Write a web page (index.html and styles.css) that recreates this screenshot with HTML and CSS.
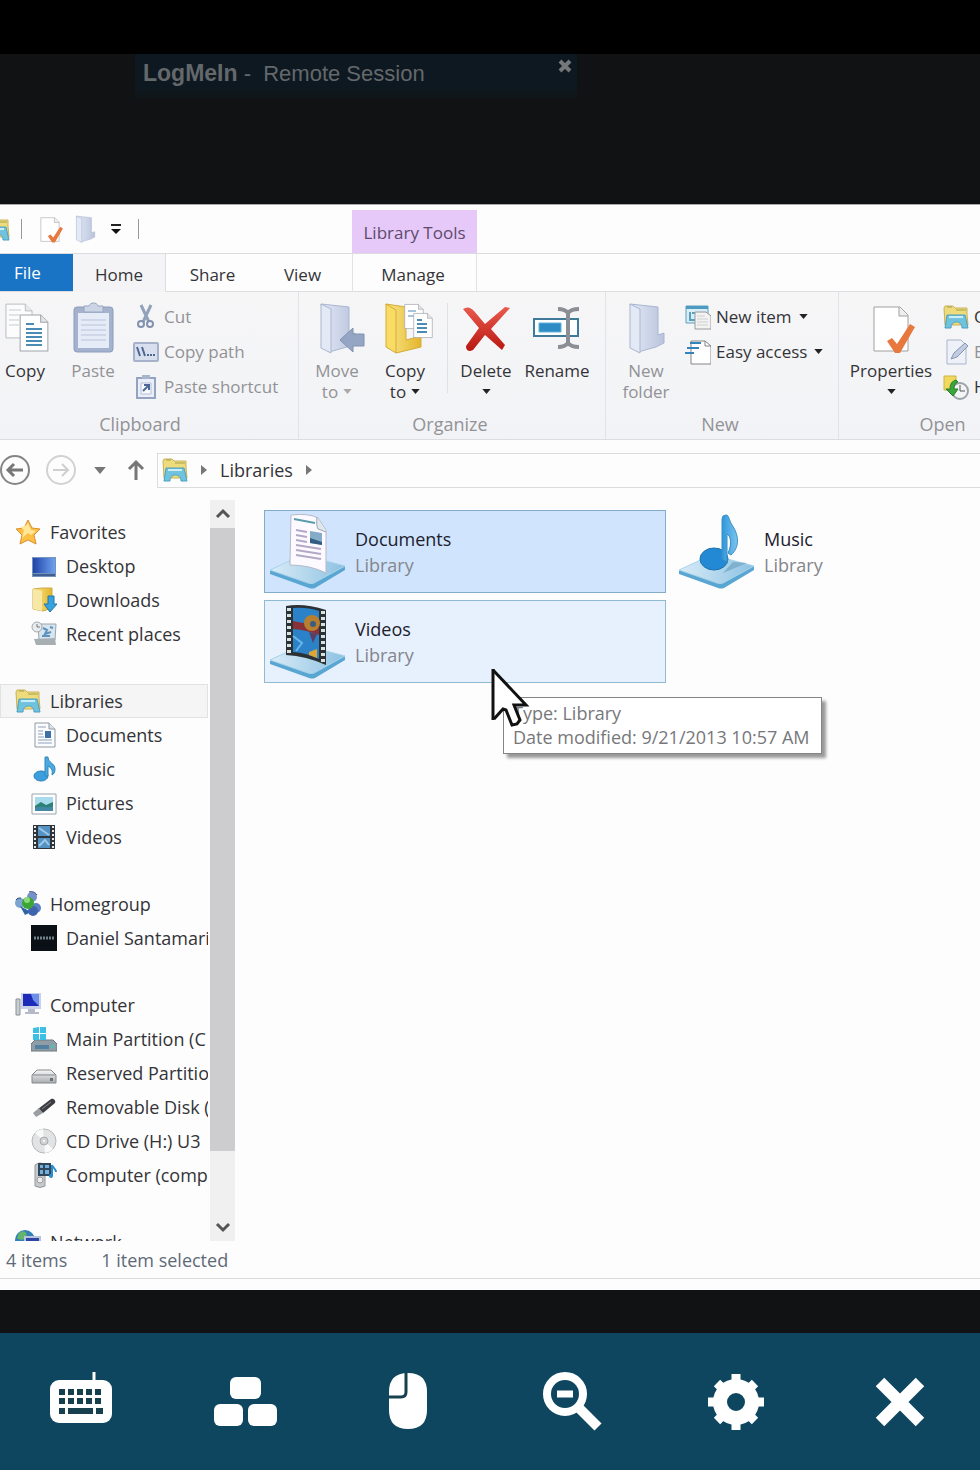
FILE: index.html
```
<!DOCTYPE html>
<html lang="en">
<head>
    <meta charset="UTF-8">
    <meta name="viewport" content="width=device-width, initial-scale=1.0">
    <title>LogMeIn - Remote Session</title>
    <link rel="stylesheet" href="styles.css">
</head>
<body>
    <!-- Shared icon shapes -->
    <svg class="sprite" aria-hidden="true">
        <defs>
            <linearGradient id="gYellow" x1="0" x2="1"><stop offset="0" stop-color="#fbe88a"/><stop offset="1" stop-color="#e3b52c"/></linearGradient>
            <linearGradient id="gPale" x1="0" x2="1"><stop offset="0" stop-color="#e3e8f5"/><stop offset="1" stop-color="#b9c4dd"/></linearGradient>
            <linearGradient id="gBase" x1="0" x2="1"><stop offset="0" stop-color="#d9ecf7"/><stop offset="1" stop-color="#8cc1e2"/></linearGradient>
            <linearGradient id="gNote" x1="0" x2="1"><stop offset="0" stop-color="#2f97dc"/><stop offset="1" stop-color="#7cc4ee"/></linearGradient>
            <linearGradient id="gDesk" x1="0" x2="1"><stop offset="0" stop-color="#1f44a8"/><stop offset="1" stop-color="#6fa1ee"/></linearGradient>
            <linearGradient id="gRed" x1="0" y1="0" x2="0" y2="1"><stop offset="0" stop-color="#ea5a4e"/><stop offset="1" stop-color="#b81710"/></linearGradient>
            <linearGradient id="gDrive" x1="0" y1="0" x2="0" y2="1"><stop offset="0" stop-color="#f7f7f7"/><stop offset="1" stop-color="#a9adb0"/></linearGradient>
        </defs>
        <symbol id="i-lib" viewBox="0 0 26 26">
            <path d="M1 4l1-2h8l2 2h12v6l1 11H2z" fill="#eedc7c" stroke="#c9b25a"/>
            <path d="M4 3h5M13 6h10" stroke="#a3a04c" fill="none"/>
            <path d="M4 11h18l3 13h-6c0-8-11-8-11 0H2z" fill="#6fc3df" stroke="#4e9fbe"/>
            <path d="M6 13h14" stroke="#cdeef8" stroke-width="2"/>
        </symbol>
        <symbol id="i-star" viewBox="0 0 26 26">
            <path d="M13 1l4 8 8 1-6 6 2 9-8-4-8 4 2-9-6-6 8-1z" fill="#fbc044" stroke="#d98f31" stroke-linejoin="round"/>
            <path d="M13 4l3 7 5 1-5 4-3-2-6 5 2-8-4-3 5-1z" fill="#ffe79a"/>
        </symbol>
        <symbol id="i-desktop" viewBox="0 0 26 26">
            <path d="M1 4h24v20H1z" fill="#7493bd"/><path d="M2 5h22v15H2z" fill="url(#gDesk)"/><path d="M2 21h22v2H2z" fill="#3f5f92"/>
        </symbol>
        <symbol id="i-down" viewBox="0 0 26 26">
            <path d="M2 2l9-1h10v20l-9 3-10-2z" fill="url(#gYellow)" stroke="#cda94a"/><path d="M2 2l9 2v20l-9-2z" fill="#f7e9a5"/>
            <path d="M17 9h6v8h3l-7 8-6-8h4z" fill="#37a3dc" stroke="#2176ab"/>
        </symbol>
        <symbol id="i-recent" viewBox="0 0 26 26">
            <path d="M7 3h18l-1 16H8z" fill="#d7e5ee" stroke="#9aa6ae"/><path d="M3 18l21-1 1 7H5z" fill="#a8afb3"/>
            <path d="M12 7l4 2-2 4 6-2M11 15h8M19 6l3 1" stroke="#5b93bd" stroke-width="2" fill="none"/>
            <circle cx="6" cy="6" r="5" fill="#e8ebed" stroke="#a3a9ad"/><path d="M6 3v3h3" stroke="#777" fill="none"/>
        </symbol>
        <symbol id="i-doc" viewBox="0 0 26 26">
            <path d="M4 1h14l6 6v18H4z" fill="#fbfcfd" stroke="#8f9aa3"/><path d="M18 1v6h6" fill="#dde5ea" stroke="#8f9aa3"/>
            <path d="M7 5h8M7 9h5M7 12h5M7 15h6M7 18h14M7 21h14" stroke="#8fa0b8" fill="none"/><path d="M14 9h6v7h-6z" fill="#3d6fa8"/>
        </symbol>
        <symbol id="i-music" viewBox="0 0 26 26">
            <ellipse cx="10" cy="20" rx="7" ry="5" fill="#3b9fdd" stroke="#2b7fb8"/>
            <path d="M14 20V1h3c0 6 7 6 7 12 0 3-1 5-3 6 1-6-1-7-4-9v10z" fill="#4aa9e0" stroke="#3087bd"/>
        </symbol>
        <symbol id="i-pic" viewBox="0 0 26 26">
            <path d="M1 4h24v20H1z" fill="#fff" stroke="#99a4ad"/><path d="M4 7h18v14H4z" fill="#a8dbee"/><path d="M4 16l6-4 5 3 7-3v9H4z" fill="#2c8274"/><path d="M4 18c6-3 12 1 18-2v5H4z" fill="#4287a5"/>
        </symbol>
        <symbol id="i-video" viewBox="0 0 26 26">
            <path d="M2 1h22v24H2z" fill="#30353c"/><path d="M7 2h12v10H7zM7 14h12v10H7z" fill="#5492c4"/>
            <path d="M8 4l10 7M8 22l6-6 4 5" stroke="#9cc8e8" stroke-width="2" fill="none"/>
            <path d="M4 2v23M22 2v23" stroke="#e5e9ec" stroke-width="2" stroke-dasharray="2 2"/>
        </symbol>
        <symbol id="i-home" viewBox="0 0 26 26">
            <circle cx="17" cy="6" r="5" fill="#7592c8"/><circle cx="5" cy="12" r="5" fill="#7ba5cf"/><circle cx="21" cy="17" r="5" fill="#5b82c5"/>
            <path d="M5 15l5 9 6-3" fill="#2e63a5"/><circle cx="18" cy="20" r="5" fill="#3f64ae"/>
            <circle cx="13" cy="12" r="6" fill="#3ba536"/><circle cx="12" cy="9" r="3" fill="#8ed97c"/><path d="M14 1c3-1 6 0 8 3M1 9c1-2 3-2 5-2" stroke="#27417c" fill="none"/>
        </symbol>
        <symbol id="i-user" viewBox="0 0 26 26">
            <path d="M0 0h26v26H0z" fill="#0b1016"/><path d="M3 13h20" stroke="#72808a" stroke-width="3" stroke-dasharray="2 1"/>
        </symbol>
        <symbol id="i-pc" viewBox="0 0 26 26">
            <path d="M1 7h4v16H1z" fill="#c9ccd0" stroke="#8c9196"/><path d="M6 1h20v16H6z" fill="#c9d0e8"/><path d="M8 2h16v12H8z" fill="#1c2bb8"/><path d="M16 2h8v12l-6-6z" fill="#6d8fea"/><path d="M13 17h7v3h4v2H10v-2h3z" fill="#b4bac8"/>
        </symbol>
        <symbol id="i-drive" viewBox="0 0 26 26">
            <path d="M1 15l5-5h14l5 5v8H1z" fill="url(#gDrive)" stroke="#85898c" stroke-linejoin="round"/><path d="M2 15h22" stroke="#85898c"/><path d="M19 18h3v3h-3z" fill="#6a6f72"/>
        </symbol>
        <symbol id="i-main" viewBox="0 0 26 26">
            <path d="M0 18l4-4h18l4 4v7H0z" fill="#8f9da6" stroke="#6c7a82"/><path d="M4 19h14v4H4z" fill="#5480a0"/><path d="M20 19h3v3h-3z" fill="#53c0b0"/>
            <path d="M2 2l6-1v6H2zM9 1h6v6H9zM2 8h6v6H2zM9 8h6v6H9z" fill="#3cc0e6"/>
        </symbol>
        <symbol id="i-usb" viewBox="0 0 26 26">
            <path d="M7 15L20 5c3-1 5 2 4 4L12 19z" fill="#3b3d40"/><path d="M2 19l6-5 4 5-7 4z" fill="#9b9fa3"/><path d="M11 15l9-7" stroke="#85898d"/>
        </symbol>
        <symbol id="i-cd" viewBox="0 0 26 26">
            <circle cx="13" cy="13" r="12" fill="#e2e3e4" stroke="#b5b7b9"/><path d="M13 13L4 5a12 12 0 0 1 8-4zM13 13l9 8a12 12 0 0 1-8 4z" fill="#f9f9f9"/><circle cx="13" cy="13" r="4" fill="#cfd2d4" stroke="#aaa"/><circle cx="13" cy="13" r="1" fill="#fff"/>
        </symbol>
        <symbol id="i-media" viewBox="0 0 26 26">
            <path d="M4 3q5-4 10 0v21q-5 3-10 0z" fill="#c6cacc" stroke="#93989b"/><circle cx="9" cy="18" r="3" fill="#eee" stroke="#999"/>
            <path d="M7 1h13v13H7z" fill="#33475a"/><path d="M9 3h3v3H9zM14 3h4v3h-4zM9 8h3v4H9zM14 8h4v4h-4z" fill="#6fb0dc"/>
            <circle cx="20" cy="14" r="2" fill="#298cce"/><path d="M21 14V3c1 3 4 4 4 7" stroke="#298cce" stroke-width="2" fill="none"/>
        </symbol>
        <symbol id="i-net" viewBox="0 0 26 26">
            <circle cx="10" cy="11" r="10" fill="#3381b8"/><path d="M4 4c5-4 9 0 7 4s-7 3-9 1z" fill="#63b56a"/><path d="M10 8h15v12H10z" fill="#2c46a6" stroke="#b8c4dc" stroke-width="2"/>
        </symbol>
        <symbol id="i-cut" viewBox="0 0 26 26">
            <path d="M8 1l8 17M18 1l-8 17" stroke="#93a2bb" stroke-width="3" fill="none"/><circle cx="8" cy="20" r="3" fill="none" stroke="#8291ae" stroke-width="2"/><circle cx="17" cy="20" r="3" fill="none" stroke="#8291ae" stroke-width="2"/>
        </symbol>
        <symbol id="i-path" viewBox="0 0 26 26">
            <rect x="1" y="4" width="24" height="18" rx="1" fill="#d8e0f0" stroke="#a5b2ca" stroke-width="2"/><path d="M4 8l3 9M9 8l3 9" stroke="#4f6890" stroke-width="2"/><path d="M14 16h8" stroke="#4f6890" stroke-width="2" stroke-dasharray="2 1"/>
        </symbol>
        <symbol id="i-short" viewBox="0 0 26 26">
            <path d="M4 4h18v20H4z" fill="#e9eef8" stroke="#94a3c0" stroke-width="2"/><path d="M9 1h8v4H9z" fill="#a7b4cc"/><path d="M8 9h10v11H8z" fill="#f7f9fd" stroke="#b3bfd6"/><path d="M10 17l6-6M11 11h5v5" stroke="#4c6698" stroke-width="2" fill="none"/>
        </symbol>
        <symbol id="i-newitem" viewBox="0 0 26 26">
            <path d="M1 2h22v17H1z" fill="#d9edf6" stroke="#5c9fbe"/><path d="M1 2h22v3H1z" fill="#4c9cc1"/><path d="M5 8v8h5M7 9h3" stroke="#5a9fbc" stroke-width="2" fill="none"/>
            <path d="M10 8h11l5 4v13H10z" fill="#f3f3f3" stroke="#9a9a9a"/><path d="M12 12h8M12 15h11M12 18h11M12 21h11" stroke="#cfcfcf"/>
        </symbol>
        <symbol id="i-easy" viewBox="0 0 26 26">
            <path d="M6 2h14l6 5v18H6z" fill="#fff" stroke="#858585"/><path d="M20 2v5h6" fill="none" stroke="#858585"/><path d="M5 4h11M2 9h12M0 14h9" stroke="#3384bd" stroke-width="2"/>
        </symbol>
        <symbol id="i-edit" viewBox="0 0 26 26">
            <path d="M4 1h14l5 5v19H4z" fill="#eef1f8" stroke="#aab4cb"/><path d="M8 20l3-6L22 4l3 3-11 11z" fill="#c2cce0" stroke="#8595b5"/>
        </symbol>
        <symbol id="i-history" viewBox="0 0 26 26">
            <path d="M1 2h12v14H1z" fill="#f0d95e" stroke="#cbb347"/><circle cx="17" cy="17" r="8" fill="#f2f4f5" stroke="#9da3a8" stroke-width="2"/><path d="M17 11v6h5" stroke="#555" fill="none"/><path d="M13 6c-4 1-6 4-6 9H3l7 7 5-7h-4c0-3 1-6 4-7z" fill="#3ba53a" stroke="#287d29"/>
        </symbol>
        <symbol id="i-props" viewBox="0 0 48 52">
            <path d="M7 5h26l8 8v36H7z" fill="#fff" stroke="#a0a0a0" stroke-width="1"/><path d="M32 5v9h9" fill="#eee" stroke="#a0a0a0"/>
            <path d="M20 39l5-3 5 6 13-20 5 3-15 26h-5z" fill="#e7793f"/>
        </symbol>
        <symbol id="i-palefolder" viewBox="0 0 48 52">
            <path d="M8 2l28 3v28l6-2v10l-8 4-18 5z" fill="url(#gPale)" stroke="#aab6d0"/><path d="M8 2l10 5v44L8 46z" fill="#e4e9f6" stroke="#aab6d0"/>
        </symbol>
        <symbol id="i-bigdoc" viewBox="0 0 29 37">
            <path d="M1 1h20l7 7v28H1z" fill="#fff" stroke="#9fa5aa"/><path d="M21 1v7h7" fill="#e5e5e5" stroke="#9fa5aa"/>
        </symbol>
        <symbol id="i-base" viewBox="0 0 78 78">
            <path d="M1 58l30-14q3-2 7 0l38 9v4L46 75q-3 1-6 0L1 61z" fill="#5aa6d2"/>
            <path d="M1 57l30-14q3-2 7 0l38 10L45 70q-3 1-6 0z" fill="url(#gBase)" stroke="#a8d3ea"/>
        </symbol>
        <symbol id="i-caret" viewBox="0 0 10 6"><path d="M0 0h10L5 6z" fill="currentColor"/></symbol>
    </svg>

    <div class="app">
        <div class="phone-bar"></div>
        <header class="session">
            <div class="session-bar">
                <p><b>LogMeIn</b> - &nbsp;Remote Session</p>
                <button class="session-close" aria-label="Close session">
                    <svg width="14" height="14" viewBox="0 0 14 14"><path d="M2 2l10 10M12 2L2 12" stroke="currentColor" stroke-width="4"/></svg>
                </button>
            </div>
        </header>

        <div class="window">
            <div class="titlebar">
                <div class="quick">
                    <svg class="quick-lib" viewBox="16 0 10 26"><use href="#i-lib" width="26" height="26"/></svg>
                    <span class="bar"></span>
                    <button aria-label="Properties"><svg width="26" height="28"><use href="#i-props"/></svg></button>
                    <button aria-label="New folder"><svg width="26" height="28"><use href="#i-palefolder"/></svg></button>
                    <button class="quick-more" aria-label="Customize"><svg width="10" height="10" viewBox="0 0 10 10"><path d="M0 1h10" stroke="#222" stroke-width="2"/><path d="M0 5h10l-5 5z" fill="#111"/></svg></button>
                    <span class="bar"></span>
                </div>
                <div class="lib-tools">Library Tools</div>
            </div>

            <nav class="tabs">
                <a href="#" class="file">File</a>
                <a href="#" class="home">Home</a>
                <a href="#" class="share">Share</a>
                <a href="#" class="view">View</a>
                <a href="#" class="manage">Manage</a>
            </nav>

            <div class="ribbon">
                <section class="group clipboard">
                    <div class="tools">
                        <button class="big copy">
                            <svg viewBox="0 0 48 52"><use href="#i-bigdoc" x="4" y="1" width="28" height="36" opacity="0.7"/><path d="M8 8h12M8 13h10M8 18h10M8 23h10" stroke="#c5ccd3"/><use href="#i-bigdoc" x="18" y="12" width="30" height="38"/><path d="M25 22h8M25 27h16M25 31h16M25 35h16M25 39h16M25 43h16" stroke="#4a8cb4" stroke-width="2"/></svg>
                            Copy
                        </button>
                        <button class="big paste off">
                            <svg viewBox="0 0 48 52"><rect x="5" y="5" width="39" height="45" rx="3" fill="#a4b2ce" stroke="#8d9cbc"/><path d="M9 11h31v35H9z" fill="#e6ecf7"/><path d="M12 18h25M12 23h25M12 28h25M12 33h25M12 38h25" stroke="#b9c4da"/><path d="M15 4h5c1-4 8-4 9 0h5v6H15z" fill="#ccd5e5" stroke="#98a6c1"/></svg>
                            Paste
                        </button>
                        <div class="stack">
                            <button class="small off"><svg><use href="#i-cut"/></svg>Cut</button>
                            <button class="small off"><svg><use href="#i-path"/></svg>Copy path</button>
                            <button class="small off"><svg><use href="#i-short"/></svg>Paste shortcut</button>
                        </div>
                    </div>
                    <h2>Clipboard</h2>
                </section>
                <section class="group organize">
                    <div class="tools">
                        <button class="big off">
                            <svg viewBox="0 0 48 52"><use href="#i-palefolder"/><path d="M27 38l13-12v6h11v12H40v6z" fill="#94a6c4" stroke="#8292b0"/></svg>
                            Move<span>to <svg class="caret"><use href="#i-caret"/></svg></span>
                        </button>
                        <button class="big">
                            <svg viewBox="0 0 48 52"><path d="M5 2l20 3v33l15-4v11L15 51z" fill="url(#gYellow)" stroke="#d4ac3a"/><path d="M5 2l10 6v43L5 45z" fill="#f8dc63" stroke="#d4ac3a"/><use href="#i-bigdoc" x="23" y="1" width="20" height="27"/><path d="M27 9h8M27 14h6" stroke="#4a8cb4"/><use href="#i-bigdoc" x="32" y="10" width="20" height="27"/><path d="M36 18h5M36 22h10M36 26h10M36 30h10" stroke="#4a8cb4" stroke-width="2"/></svg>
                            Copy<span>to <svg class="caret"><use href="#i-caret"/></svg></span>
                        </button>
                        <span class="divider"></span>
                        <button class="big delete">
                            <svg viewBox="0 0 48 52"><path d="M1 7q6-4 11 2l11 13L43 5l5 1-19 21 14 16-3 5-17-15L11 48q-7 3-7-4l13-18z" fill="url(#gRed)"/></svg>
                            Delete<span><svg class="caret"><use href="#i-caret"/></svg></span>
                        </button>
                        <button class="big rename">
                            <svg viewBox="0 0 48 52"><path d="M1 17h44v17H1z" fill="#fff" stroke="#40799a" stroke-width="2"/><path d="M6 21h22v9H6z" fill="#2d8cc3" stroke="#61b2dc"/><path d="M25 7q7 0 10 4 3-4 11-4M25 45q7 0 10-4 3 4 11 4M35 10v32" stroke="#8b8f95" stroke-width="4" fill="none"/></svg>
                            Rename
                        </button>
                    </div>
                    <h2>Organize</h2>
                </section>
                <section class="group new">
                    <div class="tools">
                        <button class="big folder off">
                            <svg viewBox="0 0 48 52"><use href="#i-palefolder"/></svg>
                            New<span>folder</span>
                        </button>
                        <div class="stack">
                            <button class="small"><svg><use href="#i-newitem"/></svg>New item <svg class="caret"><use href="#i-caret"/></svg></button>
                            <button class="small"><svg><use href="#i-easy"/></svg>Easy access <svg class="caret"><use href="#i-caret"/></svg></button>
                        </div>
                    </div>
                    <h2>New</h2>
                </section>
                <section class="group open">
                    <div class="tools">
                        <button class="big props">
                            <svg viewBox="0 0 48 52"><use href="#i-props"/></svg>
                            Properties<span><svg class="caret"><use href="#i-caret"/></svg></span>
                        </button>
                        <div class="stack">
                            <button class="small"><svg><use href="#i-lib"/></svg>Open</button>
                            <button class="small off"><svg><use href="#i-edit"/></svg>Edit</button>
                            <button class="small"><svg><use href="#i-history"/></svg>History</button>
                        </div>
                    </div>
                    <h2>Open</h2>
                </section>
            </div>

            <div class="address-row">
                <button class="back" aria-label="Back"><svg width="30" height="32" viewBox="0 0 30 32"><circle cx="15" cy="16" r="14" fill="none" stroke="#858585" stroke-width="2"/><path d="M23 16H9M14 10l-6 6 6 6" fill="none" stroke="#777" stroke-width="3"/></svg></button>
                <button class="forward" aria-label="Forward"><svg width="32" height="32" viewBox="0 0 32 32"><circle cx="16" cy="16" r="14" fill="none" stroke="#d2d2d2" stroke-width="2"/><path d="M8 16h14M17 10l6 6-6 6" fill="none" stroke="#cfcfcf" stroke-width="2"/></svg></button>
                <button class="recent" aria-label="Recent locations"><svg width="12" height="7" viewBox="0 0 10 6"><use href="#i-caret"/></svg></button>
                <button class="up" aria-label="Up"><svg width="16" height="20" viewBox="0 0 16 20"><path d="M8 20V3M1 9l7-7 7 7" fill="none" stroke="#777" stroke-width="3"/></svg></button>
                <div class="address">
                    <svg width="26" height="26"><use href="#i-lib"/></svg>
                    <svg width="6" height="10" viewBox="0 0 6 10"><path d="M0 0l6 5-6 5z" fill="#777"/></svg>
                    <a href="#">Libraries</a>
                    <svg width="6" height="10" viewBox="0 0 6 10"><path d="M0 0l6 5-6 5z" fill="#777"/></svg>
                </div>
            </div>

            <div class="content">
                <nav class="tree">
                    <ul>
                        <li><a href="#"><svg><use href="#i-star"/></svg>Favorites</a></li>
                        <li class="child"><a href="#"><svg><use href="#i-desktop"/></svg>Desktop</a></li>
                        <li class="child"><a href="#"><svg><use href="#i-down"/></svg>Downloads</a></li>
                        <li class="child"><a href="#"><svg><use href="#i-recent"/></svg>Recent places</a></li>
                    </ul>
                    <ul>
                        <li class="selected"><a href="#"><svg><use href="#i-lib"/></svg>Libraries</a></li>
                        <li class="child"><a href="#"><svg><use href="#i-doc"/></svg>Documents</a></li>
                        <li class="child"><a href="#"><svg><use href="#i-music"/></svg>Music</a></li>
                        <li class="child"><a href="#"><svg><use href="#i-pic"/></svg>Pictures</a></li>
                        <li class="child"><a href="#"><svg><use href="#i-video"/></svg>Videos</a></li>
                    </ul>
                    <ul>
                        <li><a href="#"><svg><use href="#i-home"/></svg>Homegroup</a></li>
                        <li class="child"><a href="#"><svg><use href="#i-user"/></svg>Daniel Santamari</a></li>
                    </ul>
                    <ul>
                        <li><a href="#"><svg><use href="#i-pc"/></svg>Computer</a></li>
                        <li class="child"><a href="#"><svg><use href="#i-main"/></svg>Main Partition (C</a></li>
                        <li class="child"><a href="#"><svg><use href="#i-drive"/></svg>Reserved Partitio</a></li>
                        <li class="child"><a href="#"><svg><use href="#i-usb"/></svg>Removable Disk (</a></li>
                        <li class="child"><a href="#"><svg><use href="#i-cd"/></svg>CD Drive (H:) U3</a></li>
                        <li class="child"><a href="#"><svg><use href="#i-media"/></svg>Computer (comp</a></li>
                    </ul>
                    <ul>
                        <li><a href="#"><svg><use href="#i-net"/></svg>Network</a></li>
                    </ul>
                </nav>
                <div class="scrollbar">
                    <button aria-label="Scroll up"><svg width="14" height="10" viewBox="0 0 14 10"><path d="M1 8l6-6 6 6" fill="none" stroke="#555" stroke-width="3"/></svg></button>
                    <div class="thumb"></div>
                    <div class="track"></div>
                    <button aria-label="Scroll down"><svg width="14" height="10" viewBox="0 0 14 10"><path d="M1 2l6 6 6-6" fill="none" stroke="#555" stroke-width="3"/></svg></button>
                </div>
                <main class="files">
                    <a href="#" class="item picked">
                        <svg viewBox="0 0 78 78"><use href="#i-base"/><path d="M22 2q18-2 27 3l8 12v43q-16-8-36-8z" fill="#fdfaff" stroke="#b5b9c8"/><path d="M48 4q-1 9 1 12l8 3" fill="#dfe6ee" stroke="#9aa6b5"/><path d="M25 6l21 4" stroke="#5a9cac" stroke-width="2"/><path d="M27 17l11 2M27 22l11 2M27 27l11 2M27 32l25 4M27 37l25 4M27 42l25 4" stroke="#b3a8c6" stroke-width="2"/><path d="M41 18l12 2v12l-12-2z" fill="#84acc9"/><path d="M41 25l12 4v3l-12-2z" fill="#335d80"/></svg>
                        <span>Documents<small>Library</small></span>
                    </a>
                    <a href="#" class="item">
                        <svg viewBox="0 0 78 78"><use href="#i-base"/><path d="M45 60l24-10-14-1z" fill="#7fb0ce"/><ellipse cx="36" cy="46" rx="14" ry="11" fill="#2389d5" stroke="#1c72ad"/><path d="M44 46V6q0-4 4-4c3 0 3 5 6 10 7 10 8 22-1 30l-3-2c4-8 3-17-1-19v28z" fill="url(#gNote)" stroke="#3a8fc2"/></svg>
                        <span>Music<small>Library</small></span>
                    </a>
                    <div class="tip-holder">
                        <a href="#" class="item hover">
                            <svg viewBox="0 0 78 78"><use href="#i-base"/><path d="M17 3q18-3 40 4v55q-20-9-40-10z" fill="#2c3136"/><path d="M24 5q14-1 26 3v48q-12-6-26-7z" fill="#2b82c9"/><path d="M24 18l26 5v9q-12-5-26-6z" fill="#883139"/><circle cx="43" cy="20" r="8" fill="#b8802e"/><circle cx="44" cy="21" r="3" fill="#3a5c82"/><path d="M40 29l8 2-4 9z" fill="#5b3f63"/><path d="M40 49l8-3v9l-8-3z" fill="#dba636"/><path d="M24 33l9 7-6 8" stroke="#6cb6e6" stroke-width="2" fill="none"/><path d="M20 5v47M54 8v53" stroke="#d8e3e0" stroke-width="4" stroke-dasharray="3 3"/></svg>
                            <span>Videos<small>Library</small></span>
                        </a>
                        <div class="tooltip">Type: Library<br>Date modified: 9/21/2013 10:57 AM</div>
                        <svg class="cursor" width="38" height="60" viewBox="0 0 38 60"><path d="M2 3v48l10-10h4l5 13 4 3 5-4-4-14h10z" fill="#fff"/><path d="M3 1v51" stroke="#111" stroke-width="3" fill="none"/><path d="M3 2l33 35H24l6 15-3 4-5 1-6-15-3-1-9 10" stroke="#111" stroke-width="3" fill="none"/></svg>
                    </div>
                </main>
            </div>

            <footer class="status"><span>4 items</span><span>1 item selected</span></footer>
        </div>

        <nav class="toolbar">
            <button aria-label="Keyboard">
                <svg viewBox="0 0 64 64"><path d="M44 2v10" stroke="#fff" stroke-width="3"/><rect x="0" y="10" width="62" height="43" rx="9" fill="#fff"/><path d="M9 22h44M9 31h44" stroke="#17404f" stroke-width="6" stroke-dasharray="6 3"/><path d="M9 41h6M18 41h25M46 41h7" stroke="#17404f" stroke-width="6"/></svg>
            </button>
            <button aria-label="Special keys">
                <svg viewBox="0 0 64 64"><g fill="#fff"><rect x="17" y="7" width="31" height="22" rx="6"/><rect x="1" y="34" width="29" height="22" rx="6"/><rect x="35" y="34" width="29" height="22" rx="6"/></g></svg>
            </button>
            <button aria-label="Mouse">
                <svg viewBox="0 0 64 64"><path d="M13 22Q13 3 32 3t19 19v18Q51 59 32 59T13 40z" fill="#fff"/><path d="M30 2v20q0 5-5 5H12" fill="none" stroke="#17404f" stroke-width="3"/></svg>
            </button>
            <button aria-label="Zoom out">
                <svg viewBox="0 0 64 64"><circle cx="25" cy="24" r="18" fill="none" stroke="#fff" stroke-width="8"/><path d="M17 24h16" stroke="#fff" stroke-width="7"/><path d="M37 36l21 21" stroke="#fff" stroke-width="10"/></svg>
            </button>
            <button aria-label="Settings">
                <svg viewBox="0 0 64 64"><g stroke="#fff" fill="none"><circle cx="33" cy="32" r="16" stroke-width="14"/><g stroke-width="9"><path d="M33 4v10M33 50v10M5 32h10M51 32h10"/><path d="M14 13l8 8M44 43l8 8M52 13l-8 8M22 43l-8 8"/></g></g></svg>
            </button>
            <button aria-label="Close">
                <svg viewBox="0 0 64 64"><path d="M14 12l40 40M54 12L14 52" stroke="#fff" stroke-width="12"/></svg>
            </button>
        </nav>
    </div>
</body>
</html>
```
FILE: styles.css
```
* {
    box-sizing: border-box;
}

body {
    margin: 0;
    font-family: "Open Sans", "Noto Sans", sans-serif;
    font-size: 18px;
    color: #343438;
    background: #111213;
}

button {
    margin: 0;
    padding: 0;
    border: none;
    background: none;
    font: inherit;
    color: inherit;
    cursor: pointer;
}

a {
    color: inherit;
    text-decoration: none;
}

svg {
    display: block;
    flex: none;
    overflow: visible;
}

.sprite {
    position: absolute;
    width: 0;
    height: 0;
}

.app {
    display: flex;
    flex-direction: column;
    height: 100vh;
    overflow: hidden;
}

/* Phone and session header */
.phone-bar {
    flex: none;
    height: 54px;
    background: #000;
}

.session {
    flex: none;
    height: 150px;
    padding-left: 135px;
}

.session-bar {
    display: flex;
    justify-content: space-between;
    align-items: flex-start;
    max-width: 442px;
    height: 44px;
    padding: 5px 5px 0 8px;
    background: linear-gradient(#0d1821 70%, #101618);
    color: #64686b;
    font-family: "Liberation Sans", Arial, sans-serif;
    font-size: 22px;
    line-height: 28px;
}

.session-bar p {
    margin: 0;
}

.session-bar b {
    font-size: 23px;
}

.session-close {
    color: #74787b;
}

/* Explorer window */
.window {
    flex: 1;
    min-height: 0;
    display: flex;
    flex-direction: column;
    margin-bottom: 43px;
    background: #fdfdfd;
    border-top: 1px solid #aaa;
}

.titlebar {
    flex: none;
    display: flex;
    height: 49px;
    border-bottom: 1px solid #dcdcde;
}

.quick {
    display: flex;
    align-items: center;
    width: 352px;
    gap: 9px;
}

.quick-lib {
    width: 10px;
    height: 26px;
    overflow: hidden;
}

.bar {
    width: 1px;
    height: 20px;
    margin: 0 6px 0 2px;
    background: #999;
}

.quick-more {
    margin: 0 6px 0 4px;
}

.lib-tools {
    width: 125px;
    margin-top: 5px;
    background: #e6c9f8;
    color: #5d4a6c;
    font-size: 17px;
    line-height: 46px;
    text-align: center;
}

.tabs {
    flex: none;
    display: flex;
    height: 38px;
    font-size: 17px;
    line-height: 42px;
    text-align: center;
    border-bottom: 1px solid #dedee2;
}

.tabs .file {
    width: 73px;
    padding-left: 14px;
    background: #1a74c6;
    color: #fff;
    text-align: left;
    line-height: 38px;
}

.tabs .home {
    width: 93px;
    height: 38px;
    background: #f4f4f6;
    border-right: 1px solid #dedee2;
}

.tabs .share {
    width: 93px;
}

.tabs .view {
    width: 87px;
}

.tabs .manage {
    width: 125px;
    margin-left: 6px;
    padding-right: 3px;
    border: 1px solid #e2e2e2;
    border-width: 0 1px;
}

/* Ribbon */
.ribbon {
    flex: none;
    display: flex;
    height: 148px;
    background: linear-gradient(#f6f6f7, #f2f3f6);
    border-bottom: 1px solid #dcdcde;
    overflow: hidden;
    font-size: 17px;
}

.group {
    flex: none;
    display: flex;
    flex-direction: column;
    justify-content: space-between;
    padding-top: 7px;
    border-right: 1px solid #e2e3e8;
}

.group h2 {
    margin: 0;
    padding-right: 4px;
    font-size: 18px;
    font-weight: normal;
    line-height: 30px;
    text-align: center;
    color: #929296;
}

.clipboard {
    width: 299px;
}

.clipboard h2 {
    padding-right: 18px;
}

.organize {
    width: 307px;
}

.new {
    width: 233px;
}

.open {
    width: 212px;
}

.tools {
    display: flex;
    align-items: flex-start;
}

.big {
    display: flex;
    flex-direction: column;
    align-items: center;
    width: 68px;
    padding-top: 3px;
    line-height: 21px;
}

.big > svg {
    width: 48px;
    height: 52px;
    margin-bottom: 6px;
}

.big span {
    display: flex;
    align-items: center;
    justify-content: center;
    gap: 5px;
    min-height: 20px;
}

.off {
    color: #929296;
}

svg.caret {
    width: 9px;
    height: 5px;
    color: #222;
}

.off svg.caret {
    color: #aaa;
}

.copy {
    width: 50px;
}

.paste {
    width: 70px;
    margin: 0 5px 0 8px;
}

.organize .tools {
    padding-left: 4px;
}

.divider {
    width: 1px;
    height: 90px;
    margin: 4px 3px 0 8px;
    background: #e0e1e6;
}

.delete {
    width: 70px;
}

.rename {
    width: 72px;
}

.folder {
    width: 74px;
    margin: 0 2px 0 3px;
}

.props {
    width: 100px;
    margin: 0 2px;
}

.small {
    display: flex;
    align-items: center;
    gap: 5px;
    height: 35px;
    white-space: nowrap;
}

.small > svg:first-child {
    width: 26px;
    height: 26px;
}

.small .caret {
    margin-left: 2px;
}

/* Address row */
.address-row {
    flex: none;
    display: flex;
    align-items: center;
    height: 60px;
}

.forward {
    margin: 0 17px 0 15px;
}

.recent {
    margin-right: 22px;
    color: #777;
}

.up {
    margin-right: 13px;
}

.address {
    flex: 1;
    display: flex;
    align-items: center;
    gap: 13px;
    height: 35px;
    padding-left: 4px;
    line-height: 32px;
    border: 1px solid #dcdcdc;
    border-right: none;
}

/* Tree, scrollbar and files */
.content {
    flex: 1;
    min-height: 0;
    display: flex;
    overflow: hidden;
}

.tree {
    width: 210px;
    padding: 15px 2px 0 0;
    overflow: hidden;
}

.tree ul {
    margin: 0 0 33px;
    padding: 0;
    list-style: none;
}

.tree a {
    display: flex;
    align-items: center;
    gap: 9px;
    height: 34px;
    padding-left: 15px;
    overflow: hidden;
    white-space: nowrap;
}

.tree svg {
    width: 26px;
    height: 26px;
}

.tree .child a {
    padding-left: 31px;
}

.tree .selected a {
    background: #f5f5f5;
    box-shadow: inset 0 0 0 1px #e2e2e2;
}

.scrollbar {
    display: flex;
    flex-direction: column;
    width: 25px;
    background: #f0f0f0;
}

.scrollbar button {
    height: 28px;
    padding-left: 6px;
}

.thumb {
    flex: 10;
    background: #cdcdcf;
}

.track {
    flex: 1;
}

.files {
    flex: 1;
    display: grid;
    grid-template-columns: 402px 402px;
    grid-auto-rows: 83px;
    gap: 7px;
    padding: 10px 0 0 29px;
    overflow: hidden;
}

.item {
    display: flex;
    align-items: center;
    gap: 8px;
    height: 83px;
    padding-left: 4px;
    border: 1px solid transparent;
    line-height: 26px;
    color: #20202e;
}

.item > svg {
    width: 78px;
    height: 78px;
}

.item small {
    display: block;
    font-size: 18px;
    color: #85858c;
}

.picked {
    background: #d0e5fd;
    border-color: #84acc8;
}

.hover {
    background: #e7f1fd;
    border-color: #8fbcd2;
}

.tip-holder {
    position: relative;
}

.tooltip {
    position: absolute;
    top: 97px;
    left: 239px;
    padding: 3px 11px 4px 9px;
    background: #fff;
    border: 1px solid #858585;
    box-shadow: 4px 4px 3px #999;
    color: #77777b;
    line-height: 24px;
    white-space: nowrap;
}

.cursor {
    position: absolute;
    top: 68px;
    left: 226px;
}

.status {
    flex: none;
    display: flex;
    gap: 34px;
    height: 49px;
    padding-left: 6px;
    line-height: 38px;
    color: #5f6a78;
    background: linear-gradient(#fdfdfd 37px, #d8dcde 37px, #d8dcde 38px, #fdfdfd 38px);
}

/* Bottom toolbar */
.toolbar {
    flex: none;
    display: grid;
    grid-template-columns: repeat(6, 1fr);
    height: 137px;
    background: #0e4660;
}

.toolbar button {
    display: flex;
    align-items: center;
    justify-content: center;
}

.toolbar svg {
    width: 64px;
    height: 64px;
}
```
